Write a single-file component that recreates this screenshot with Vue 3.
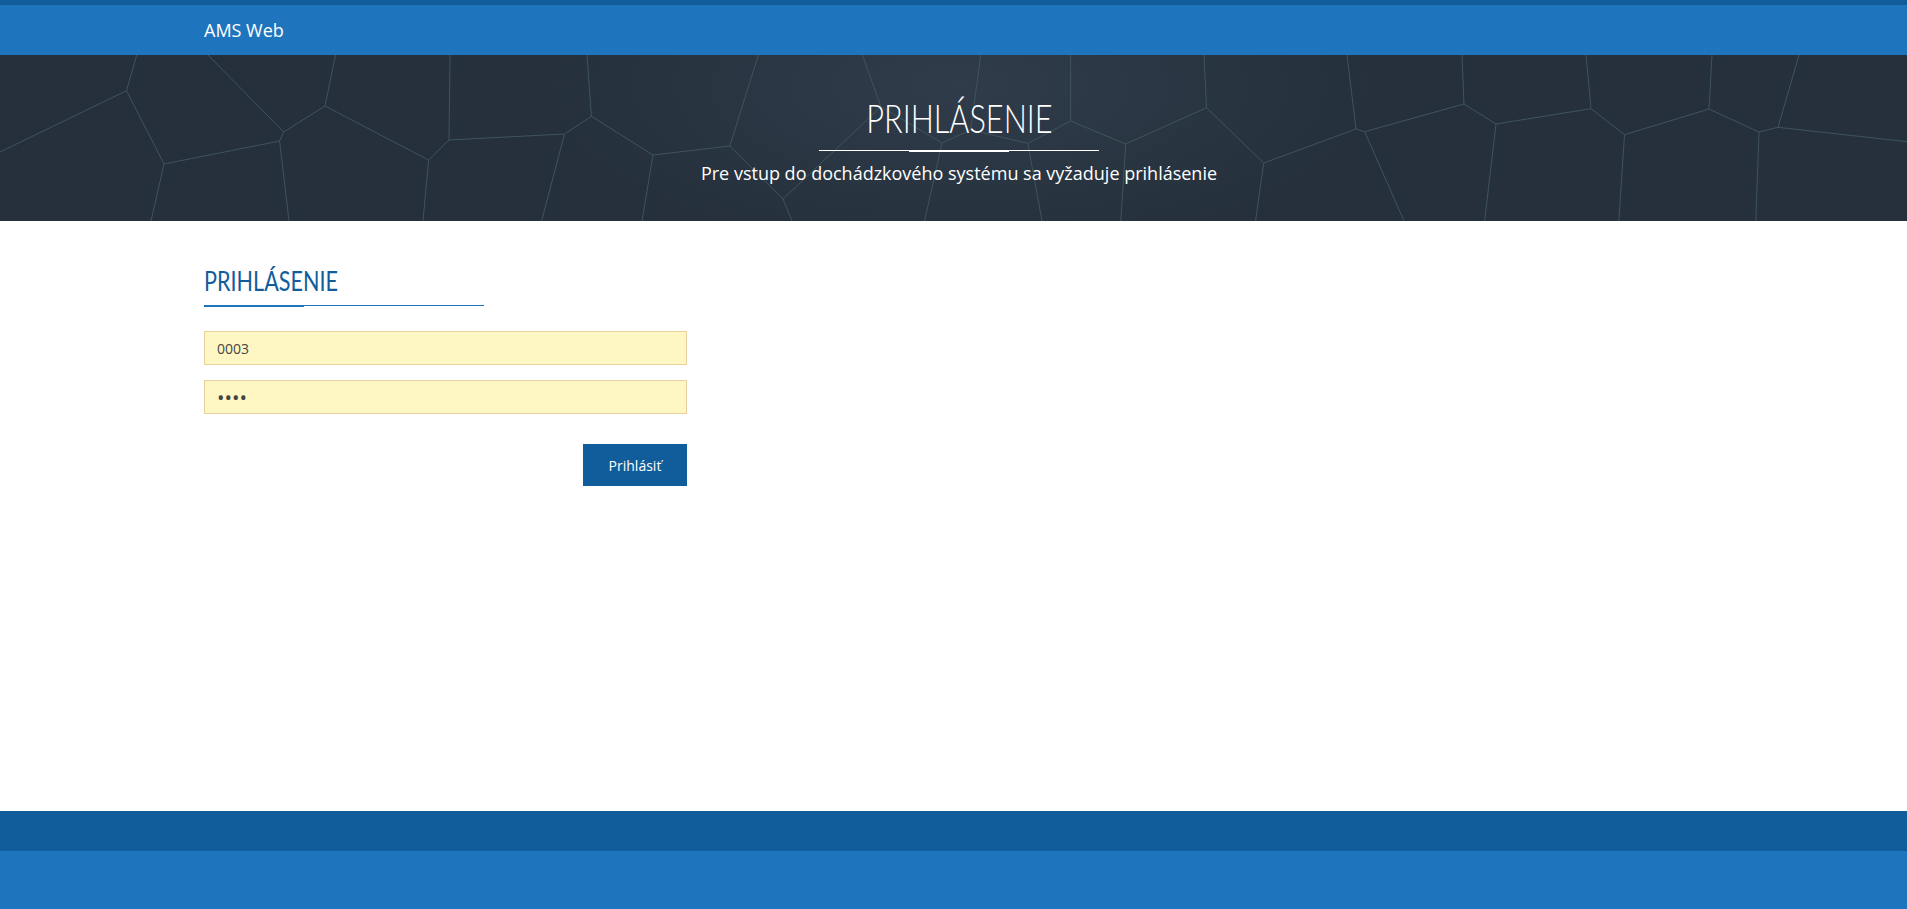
<script setup>
import { ref } from 'vue'

const login = ref('0003')
const password = ref('0000')

// cell borders of the hero background, in page coordinates minus the 55px header
const cells = [
  '0,97 126.5,35.7 136.7,0',
  '126.5,35.7 164,109 279.6,86 283.7,77 208,0',
  '164,109 151,166',
  '279.6,86 289,166',
  '283.7,77 325,51 335.5,0',
  '325,51 428.6,105 449,85 450,0',
  '428.6,105 423,166',
  '449,85 564.5,79 591.4,61.3 587,0',
  '564.5,79 541.6,166',
  '591.4,61.3 653,100 729.8,91 758.4,0',
  '653,100 642,166',
  '729.8,91 783,144 792,166',
  '783,144 881,51.7 862.4,0',
  '881,51.7 942,88 940,96.7 924.5,166',
  '942,88 970.6,75 980.8,0',
  '970.6,75 1027.8,88.3 1042,166',
  '1027.8,88.3 1070.6,66 1070.6,0',
  '1070.6,66 1125.7,89 1120.8,166',
  '1125.7,89 1206.5,52.7 1204,0',
  '1206.5,52.7 1263.7,108 1255.5,166',
  '1263.7,108 1356,74 1347,0',
  '1356,74 1364.7,76.7 1404,166',
  '1364.7,76.7 1464,49 1462,0',
  '1464,49 1496,69 1484.6,166',
  '1496,69 1591,53.7 1586,0',
  '1591,53.7 1624.5,79.7 1618.8,166',
  '1624.5,79.7 1709,54 1712,0',
  '1709,54 1759,77 1755.8,166',
  '1759,77 1778,72.3 1799,0',
  '1778,72.3 1907,86.7'
]
</script>

<template>
  <div class="page">
    <header class="topbar">
      <div class="wrap brand">AMS Web</div>
    </header>

    <section class="hero">
      <svg class="cells" viewBox="0 0 1907 166" width="1907" height="166" aria-hidden="true">
        <polyline v-for="(points, i) in cells" :key="i" :points="points" />
      </svg>
      <h1 class="hero-title">PRIHLÁSENIE</h1>
      <div class="rule hero-rule"><span></span></div>
      <p class="hero-sub">Pre vstup do dochádzkového systému sa vyžaduje prihlásenie</p>
    </section>

    <main class="content">
      <div class="wrap">
        <h2 class="form-title">PRIHLÁSENIE</h2>
        <div class="rule form-rule"><span></span></div>
        <form class="form" @submit.prevent>
          <input v-model="login" class="field" type="text" />
          <input v-model="password" class="field secret" type="password" />
          <div class="actions">
            <button class="submit" type="submit">Prihlásiť</button>
          </div>
        </form>
      </div>
    </main>

    <footer class="footer">
      <div class="footer-top"></div>
      <div class="footer-bottom"></div>
    </footer>
  </div>
</template>

<style>
html, body {
  margin: 0;
  background: #fff;
}
</style>

<style scoped>
.page {
  min-height: 909px;
  display: flex;
  flex-direction: column;
  font-family: "Open Sans", "Liberation Sans", sans-serif;
}
.wrap {
  padding: 0 204px;
}
.topbar {
  height: 50px;
  background: #1f75bd;
  border-top: 5px solid #115d9b;
}
.brand {
  line-height: 50px;
  font-size: 18px;
  color: #fff;
}
.hero {
  position: relative;
  height: 166px;
  overflow: hidden;
  box-sizing: border-box;
  padding-top: 40px;
  padding-left: 11px;
  display: flex;
  flex-direction: column;
  align-items: center;
  color: #fff;
  background: radial-gradient(ellipse 420px 170px at 960px 30px, #303c4a 0%, #25303c 100%);
}
.cells {
  position: absolute;
  top: 0;
  left: 0;
}
.cells polyline {
  fill: none;
  stroke: #3f545a;
  stroke-width: 1;
}
.hero-title {
  position: relative;
  margin: 0;
  font-family: Lato, "Open Sans", sans-serif;
  font-size: 40px;
  line-height: 46px;
  font-weight: 300;
  transform: scaleX(0.767);
}
.rule {
  position: relative;
  height: 1px;
}
.rule span {
  position: absolute;
  top: 0;
  height: 2px;
  width: 100px;
}
.hero-rule {
  width: 280px;
  margin-top: 9px;
  background: #fff;
}
.hero-rule span {
  left: 90px;
  background: #fff;
}
.hero-sub {
  position: relative;
  margin: 10px 0 0;
  font-size: 18px;
  line-height: 24px;
}
.content {
  flex: 1;
  padding-top: 42px;
}
.form-title {
  margin: 0;
  font-family: Lato, "Open Sans", sans-serif;
  font-size: 27px;
  line-height: 36px;
  font-weight: 400;
  color: #115d9b;
  transform: scaleX(0.8);
  transform-origin: left center;
}
.form-rule {
  width: 280px;
  margin-top: 6px;
  background: #1f75bd;
}
.form-rule span {
  left: 0;
  background: #1f75bd;
}
.form {
  width: 483px;
  margin-top: 25px;
  display: flex;
  flex-direction: column;
  gap: 15px;
}
.field {
  height: 34px;
  box-sizing: border-box;
  padding: 0 12px;
  border: 1px solid #e8d19c;
  border-radius: 0;
  outline: none;
  background: #fff7c3;
  font-family: inherit;
  font-size: 14px;
  color: #444;
}
.secret {
  font-size: 20px;
}
.actions {
  display: flex;
  justify-content: flex-end;
  margin-top: 15px;
}
.submit {
  width: 104px;
  height: 42px;
  border: 0;
  background: #115d9b;
  font-family: inherit;
  font-size: 14px;
  color: #fff;
}
.footer-top {
  height: 40px;
  background: #115d9b;
}
.footer-bottom {
  height: 58px;
  background: #1f75bd;
}
</style>
